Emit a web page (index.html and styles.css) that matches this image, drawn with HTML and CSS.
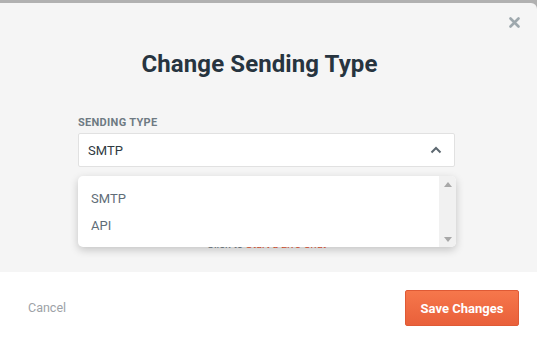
FILE: index.html
```html
<!DOCTYPE html>
<html>
<head>
<meta charset="utf-8">
<link rel="stylesheet" href="styles.css">
</head>
<body>
<div class="modal">
  <div class="modal-body">
    <button class="close" aria-label="Close">
      <svg width="11" height="11" viewBox="0 0 11 11"><path d="M1.5 1.5L9.5 9.5M9.5 1.5L1.5 9.5" stroke="#9ea8ad" stroke-width="2.6" stroke-linecap="round"/></svg>
    </button>
    <h1 class="title">Change Sending Type</h1>
    <div class="field">
      <label class="label">SENDING TYPE</label>
      <div class="select">
        <span class="select-value">SMTP</span>
        <svg class="chevron" width="12" height="8" viewBox="0 0 12 8"><path d="M1.5 6.5L6 2L10.5 6.5" fill="none" stroke="#5d6870" stroke-width="2"/></svg>
      </div>
      <p class="help">Click to <span class="help-link">Start a Live Chat</span></p>
      <div class="dropdown">
        <ul class="options">
          <li class="option">SMTP</li>
          <li class="option">API</li>
        </ul>
        <div class="scrollbar">
          <svg width="8" height="5" viewBox="0 0 8 5"><path d="M0 5L4 0L8 5Z" fill="#a8a8a8"/></svg>
          <svg width="8" height="5" viewBox="0 0 8 5"><path d="M0 0L4 5L8 0Z" fill="#a8a8a8"/></svg>
        </div>
      </div>
    </div>
  </div>
  <div class="modal-footer">
    <a class="cancel">Cancel</a>
    <button class="save">Save Changes</button>
  </div>
</div>
</body>
</html>
```
FILE: styles.css
```css
html, body {
  margin: 0;
  padding: 0;
}
body {
  background: #b1b1b1;
  font-family: Roboto, "Liberation Sans", sans-serif;
  height: 343px;
  overflow: hidden;
}
.modal {
  margin-top: 3px;
  height: 340px;
  background: #f5f5f5;
  border-top-right-radius: 6px;
  display: flex;
  flex-direction: column;
  overflow: hidden;
}
.modal-body {
  position: relative;
  height: 269px;
  box-sizing: border-box;
  padding-top: 47px;
}
.close {
  position: absolute;
  top: 14px;
  right: 17px;
  border: 0;
  background: none;
  padding: 0;
  width: 11px;
  height: 11px;
  display: flex;
}
.title {
  margin: 0;
  padding-right: 18px;
  text-align: center;
  font-size: 24px;
  line-height: 28px;
  font-weight: 700;
  color: #27343f;
  letter-spacing: 0.1px;
}
.field {
  position: relative;
  margin: 39px 0 0 78px;
  width: 377px;
}
.label {
  display: block;
  font-size: 11px;
  line-height: 12px;
  font-weight: 700;
  color: #6e7a83;
  letter-spacing: 0.3px;
  margin-bottom: 4px;
}
.select {
  height: 34px;
  box-sizing: border-box;
  background: #fff;
  border: 1px solid #e1e1e1;
  border-radius: 2px;
  display: flex;
  align-items: center;
  justify-content: space-between;
  padding: 0 12px 0 9px;
}
.select-value {
  font-size: 13px;
  color: #2f3a42;
}
.chevron {
  display: block;
}
.help {
  margin: 72px 0 0;
  text-align: center;
  font-size: 11px;
  line-height: 12px;
  color: #6f7c86;
}
.help-link {
  color: #ee5a34;
}
.dropdown {
  position: absolute;
  top: 59px;
  left: 0;
  width: 378px;
  height: 71px;
  background: #fff;
  border-radius: 5px;
  box-shadow: 0 3px 9px rgba(0, 0, 0, 0.2);
  display: flex;
  overflow: hidden;
}
.options {
  list-style: none;
  margin: 0;
  padding: 9px 0 0 13px;
  flex: 1;
}
.option {
  font-size: 13px;
  line-height: 27px;
  color: #5f6d78;
}
.scrollbar {
  width: 17px;
  background: #f1f1f1;
  display: flex;
  flex-direction: column;
  justify-content: space-between;
  align-items: center;
  padding: 6px 0 5px;
  box-sizing: border-box;
}
.scrollbar svg {
  display: block;
}
.modal-footer {
  flex: 1;
  background: #fff;
  display: flex;
  align-items: center;
  justify-content: space-between;
  padding: 0 18px 0 28px;
}
.cancel {
  font-size: 12.5px;
  color: #9da2a7;
  cursor: pointer;
}
.save {
  width: 114px;
  height: 36px;
  border: 1px solid #df5a35;
  border-radius: 2px;
  background: linear-gradient(#f6774b, #e9603a);
  color: #fff;
  font-family: Roboto, "Liberation Sans", sans-serif;
  font-size: 13px;
  font-weight: 700;
  padding: 0;
  margin-top: 1px;
}
```
